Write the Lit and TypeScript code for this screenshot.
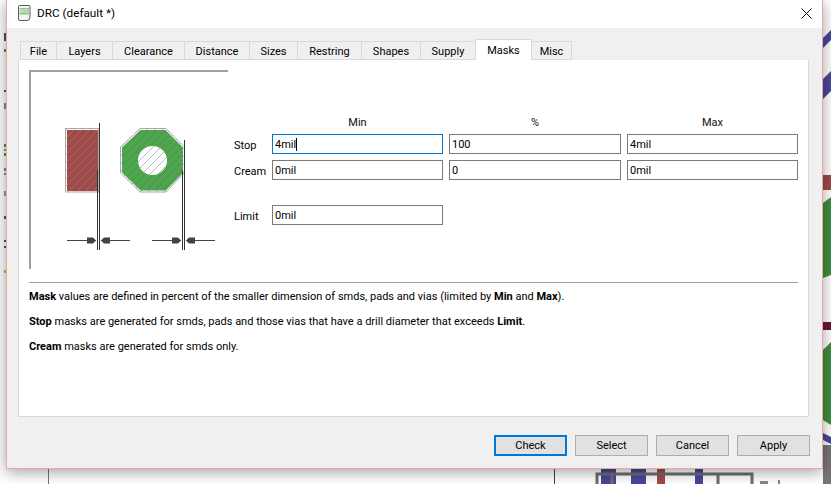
import { LitElement, html, css, svg } from "lit";
import { customElement } from "lit/decorators.js";

const TABS = ["File", "Layers", "Clearance", "Distance", "Sizes", "Restring", "Shapes", "Supply", "Masks", "Misc"];

@customElement("app-root")
export class AppRoot extends LitElement {
  static styles = css`
    :host {
      display: block;
      position: relative;
      width: 831px;
      height: 484px;
      overflow: hidden;
      background: #fff;
      font-family: Roboto, "Open Sans", sans-serif;
      font-size: 11px;
      color: #000;
    }
    .backdrop { position: absolute; left: 0; top: 0; }
    .window {
      position: absolute;
      left: 6px;
      top: 0;
      width: 817px;
      height: 469px;
      box-sizing: border-box;
      border: 1px solid #eda79e;
      border-top: none;
      background: #f0f0f0;
      box-shadow: 0 3px 14px rgba(0, 0, 0, 0.38);
      display: flex;
      flex-direction: column;
    }
    .titlebar {
      box-sizing: border-box;
      height: 28px;
      flex: none;
      background: #fff;
      display: flex;
      align-items: center;
      padding: 0 10px 2px 10px;
      gap: 6px;
      font-size: 11.75px;
    }
    .titlebar .t { flex: 1; }
    .tabs {
      display: grid;
      grid-template-columns: 37px 56px 72px 65px 48px 64px 59px 55px 56px 40px;
      width: 552px;
      height: 19px;
      margin: 13px 0 0 13px;
      position: relative;
      z-index: 1;
    }
    .tab {
      box-sizing: border-box;
      height: 19px;
      background: #f0f0f0;
      border: 1px solid #d9d9d9;
      border-left-width: 0;
      text-align: center;
      line-height: 19px;
    }
    .tab:first-child { border-left-width: 1px; }
    .tab.on {
      background: #fff;
      height: 21px;
      margin-top: -2px;
      border-bottom: none;
      padding-top: 1px;
      line-height: 20px;
      border-left-width: 1px;
      margin-left: -1px;
    }
    .panel {
      box-sizing: border-box;
      width: 791px;
      height: 357px;
      margin-left: 11px;
      background: #fff;
      border: 1px solid #d9d9d9;
      border-top: none;
      padding: 10px 10px 0 10px;
    }
    .top { display: flex; align-items: flex-start; height: 200px; }
    .form {
      display: grid;
      grid-template-columns: 32px 171px 172px 171px;
      grid-template-rows: 14px 20px 20px 13px 20px;
      gap: 6px;
      margin: 44px 0 0 6px;
    }
    .head { text-align: center; line-height: 16px; padding-top: 1px; color: #111; }
    .lab { line-height: 22px; padding-top: 1px; }
    .in {
      box-sizing: border-box;
      border: 1px solid #7a7a7a;
      height: 20px;
      line-height: 18px;
      padding: 1px 0 0 2px;
      white-space: nowrap;
    }
    .in.focus { border-color: #0078d7; }
    .caret {
      display: inline-block;
      width: 1px;
      height: 13px;
      background: #000;
      vertical-align: -3px;
    }
    .rule { height: 1px; width: 769px; background: #a0a0a0; margin-top: 12px; }
    .notes { margin-top: 1px; }
    .notes div { height: 25px; line-height: 25px; white-space: nowrap; }
    .buttons {
      display: flex;
      gap: 8px;
      margin: 18px 0 0 487px;
    }
    .btn {
      box-sizing: border-box;
      width: 73px;
      height: 21px;
      background: #e1e1e1;
      border: 1px solid #adadad;
      text-align: center;
      padding-top: 1px;
      line-height: 18px;
    }
    .btn.def { border: 2px solid #0078d7; padding-top: 0; line-height: 18px; }
  `;

  private backdrop() {
    return svg`
      <svg class="backdrop" width="831" height="484" viewBox="0 0 831 484" xmlns="http://www.w3.org/2000/svg">
        <g fill="#555">
          <rect x="4" y="33" width="2" height="8"/>
          <rect x="4" y="49" width="2" height="3" fill="#3f9f3f"/>
          <rect x="4" y="90" width="2" height="2"/>
          <rect x="4" y="103" width="2" height="6" fill="#888"/>
          <rect x="4" y="144" width="2" height="3" fill="#3f9f3f"/>
          <rect x="4" y="149" width="2" height="2" fill="#888"/>
          <rect x="4" y="153" width="2" height="3" fill="#3f9f3f"/>
          <rect x="4" y="168" width="2" height="3" fill="#888"/>
          <rect x="4" y="173" width="2" height="2" fill="#888"/>
          <rect x="4" y="191" width="2" height="5" fill="#999"/>
          <rect x="4" y="216" width="2" height="3"/>
          <rect x="4" y="240" width="2" height="2"/>
          <rect x="4" y="246" width="2" height="2"/>
          <rect x="4" y="270" width="2" height="3" fill="#e3b21c"/>
          <rect x="48" y="468" width="1" height="16" fill="#777"/>
          <rect x="554" y="468" width="1" height="16" fill="#444"/>
        </g>
        <g fill="#48489c">
          <polygon points="831,30 823,38 823,48 831,40"/>
          <polygon points="831,71 823,79 823,99 831,91"/>
          <rect x="601" y="468" width="15" height="16"/>
          <rect x="631" y="468" width="15" height="16"/>
          <rect x="695" y="468" width="8" height="16"/>
          <polygon points="823,433 831,437 831,444 823,440" />
        </g>
        <rect x="657" y="468" width="8" height="16" fill="#a04a4a"/>
        <rect x="823" y="175" width="8" height="15" fill="#a04a4a"/>
        <rect x="823" y="322" width="8" height="8" fill="#6d1738"/>
        <polygon points="823,203 831,197 831,275 823,278" fill="#3f8f3f"/>
        <polygon points="823,350 831,342 831,425 823,420" fill="#3f8f3f"/>
        <rect x="823" y="445" width="8" height="39" fill="#777"/>
        <path d="M597 484V474H752V484M718 474V484M612 474V484" fill="none" stroke="#6e6e6e" stroke-width="3"/>
        <rect x="760" y="481" width="8" height="3" fill="#888"/>
        <rect x="778" y="480" width="2" height="4" fill="#888"/>
      </svg>
    `;
  }

  private picture() {
    const arrows = (x0: number, x1: number, x2: number, x3: number, y: number) => svg`
      <path d="M${x0} ${y}H${x1}M${x2} ${y}H${x3}" stroke="#444" stroke-width="1"/>
      <path d="M${x1} ${y}l-3 -3h-6v6h6zM${x2} ${y}l3 -3h6v6h-6z" fill="#444"/>
    `;
    return svg`
      <svg width="199" height="200" viewBox="29 70 199 200" xmlns="http://www.w3.org/2000/svg" style="flex:none;display:block">
        <defs>
          <pattern id="h" width="8" height="8" patternUnits="userSpaceOnUse" patternTransform="translate(2 2)">
            <path d="M-1 9L9 -1" stroke="#a6a6a6" stroke-width="0.8"/>
          </pattern>
          <pattern id="f" width="8" height="8" patternUnits="userSpaceOnUse" patternTransform="translate(2 2)">
            <path d="M-1 9L9 -1" stroke="#a6a6a6" stroke-width="0.8" opacity="0.4"/>
          </pattern>
        </defs>
        <path d="M30 269V71H228" fill="none" stroke="#a0a0a0" stroke-width="2"/>
        <rect x="65.5" y="128.5" width="33" height="63.5" fill="url(#h)" stroke="#a8a8a8"/>
        <rect x="67" y="130" width="31" height="61" fill="#a04a4a"/>
        <rect x="67" y="130" width="31" height="61" fill="url(#f)"/>
        <polygon points="140,128.5 166,128.5 184.5,147 184.5,173 166,192 140,192 120.5,173 120.5,147" fill="url(#h)" stroke="#a8a8a8"/>
        <polygon points="140.5,130 165.5,130 183,147.5 183,172.5 165.5,190.5 140.5,190.5 122,172.5 122,147.5" fill="#4aa24a"/>
        <polygon points="140.5,130 165.5,130 183,147.5 183,172.5 165.5,190.5 140.5,190.5 122,172.5 122,147.5" fill="url(#f)"/>
        <circle cx="152.5" cy="160.5" r="14.5" fill="#fff"/>
        <circle cx="152.5" cy="160.5" r="14.5" fill="url(#h)"/>
        <path d="M99.5 123V250M97.5 170V250M184.5 140V250M182.5 170V250" stroke="#333" stroke-width="1" fill="none"/>
        ${arrows(67, 96, 101, 130, 240.5)}
        ${arrows(152, 181, 186, 215, 240.5)}
      </svg>
    `;
  }

  render() {
    return html`
      ${this.backdrop()}
      <div class="window">
        <div class="titlebar">
          <svg width="14" height="16" viewBox="0 0 14 16" xmlns="http://www.w3.org/2000/svg">
            <path d="M1.5 1.5Q1.5 .5 2.5 .5H12Q13 .5 13 1.5V12Q13 15.5 10 15.5H3Q1.5 15.5 1.5 14Z" fill="#f4f4f4" stroke="#5a5a5a"/>
            <rect x="2.5" y="3" width="9.5" height="6.5" fill="#8fc68f"/>
            <text x="7.2" y="8" font-size="5" text-anchor="middle" fill="#eaf5ea" font-family="Liberation Sans">BRD</text>
          </svg>
          <span class="t">DRC (default *)</span>
          <svg width="11" height="11" viewBox="0 0 11 11" xmlns="http://www.w3.org/2000/svg">
            <path d="M.5 .5L10.5 10.5M10.5 .5L.5 10.5" stroke="#111" stroke-width="1" fill="none"/>
          </svg>
        </div>
        <div class="tabs">
          ${TABS.map((t) => html`<div class="tab ${t === "Masks" ? "on" : ""}">${t}</div>`)}
        </div>
        <div class="panel">
          <div class="top">
            ${this.picture()}
            <div class="form">
              <span></span><span class="head">Min</span><span class="head">%</span><span class="head">Max</span>
              <span class="lab">Stop</span>
              <div class="in focus">4mil<span class="caret"></span></div>
              <div class="in">100</div>
              <div class="in">4mil</div>
              <span class="lab">Cream</span>
              <div class="in">0mil</div>
              <div class="in">0</div>
              <div class="in">0mil</div>
              <span></span><span></span><span></span><span></span>
              <span class="lab">Limit</span>
              <div class="in">0mil</div>
            </div>
          </div>
          <div class="rule"></div>
          <div class="notes">
            <div><b>Mask</b> values are defined in percent of the smaller dimension of smds, pads and vias (limited by <b>Min</b> and <b>Max</b>).</div>
            <div><b>Stop</b> masks are generated for smds, pads and those vias that have a drill diameter that exceeds <b>Limit</b>.</div>
            <div><b>Cream</b> masks are generated for smds only.</div>
          </div>
        </div>
        <div class="buttons">
          <div class="btn def">Check</div>
          <div class="btn">Select</div>
          <div class="btn">Cancel</div>
          <div class="btn">Apply</div>
        </div>
      </div>
    `;
  }
}
